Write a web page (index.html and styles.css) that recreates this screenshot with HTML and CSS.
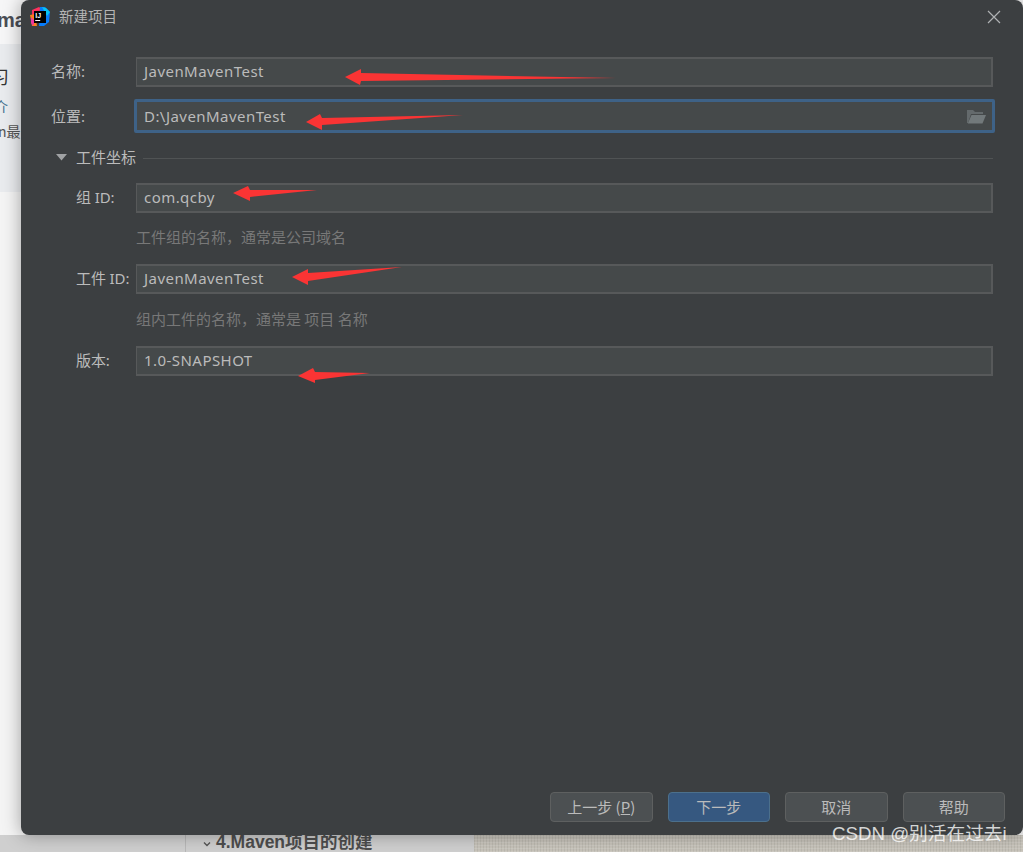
FILE: index.html
```html
<!DOCTYPE html>
<html lang="zh">
<head>
<meta charset="utf-8">
<title>新建项目</title>
<link rel="stylesheet" href="styles.css">
</head>
<body>
<div class="page">
  <div class="page-head">ma</div>
  <div class="page-panel">
    <div class="panel-icon">习</div>
    <div class="panel-line blue">介 </div>
    <div class="panel-line">n最</div>
  </div>
  <div class="page-rest"></div>
  <div class="page-foot">
    <div class="foot-side"></div>
    <div class="foot-toc">
      <svg class="toc-chevron" width="8" height="6" viewBox="0 0 8 6"><path d="M1 1.5 L4 4.5 L7 1.5" fill="none" stroke="#555" stroke-width="1.4"/></svg>
      <span>4.Maven项目的创建</span>
    </div>
    <div class="foot-texture"></div>
  </div>
</div>

<section class="dialog">
  <header class="titlebar">
    <svg class="app-icon" width="20" height="20" viewBox="0 0 20 20">
      <polygon points="2,3 9,0 13,3 10,10 2,12" fill="#fe315d"/>
      <polygon points="0,8 5,7 7,19 2,19" fill="#fc801d"/>
      <polygon points="10,0 15,0 20,5 19,15 14,19 9,19" fill="#087cfa"/>
      <polygon points="12,0 16,1 20,5 17,9" fill="#07c3f2"/>
      <polygon points="1,10 5,14 3,19 1,16" fill="#ee36a0"/>
      <rect x="4" y="4" width="12" height="12" fill="#000"/>
      <text x="5.2" y="10.6" class="app-icon-text">IJ</text>
      <rect x="5.2" y="13" width="5" height="1" fill="#fff"/>
    </svg>
    <span class="title">新建项目</span>
    <svg class="close" width="14" height="14" viewBox="0 0 14 14"><path d="M1 1 L13 13 M13 1 L1 13" stroke="#afb1b3" stroke-width="1.2" fill="none"/></svg>
  </header>

  <div class="form">
    <div class="row row-name">
      <label class="label">名称:</label>
      <div class="field">JavenMavenTest</div>
    </div>
    <div class="row row-location">
      <label class="label">位置:</label>
      <div class="field field-focus">
        <span>D:\JavenMavenTest</span>
        <svg class="folder" width="20" height="15" viewBox="0 0 20 15">
          <path d="M1 14 V1 H7 L9 3 H17 V5 H5 L2 14 Z" fill="#646a6c"/>
          <path d="M5.5 6 H20 L16.5 14.5 H1.8 Z" fill="#72797b"/>
        </svg>
      </div>
    </div>

    <div class="section">
      <svg class="caret" width="11" height="7" viewBox="0 0 11 7"><polygon points="0,0 11,0 5.5,6.5" fill="#a0a2a4"/></svg>
      <span class="section-title">工件坐标</span>
      <div class="section-rule"></div>
    </div>

    <div class="row nested row-group">
      <label class="label">组 ID:</label>
      <div class="field">com.qcby</div>
    </div>
    <p class="hint">工件组的名称，通常是公司域名</p>
    <div class="row nested row-hinted">
      <label class="label">工件 ID:</label>
      <div class="field">JavenMavenTest</div>
    </div>
    <p class="hint hint-second">组内工件的名称，通常是 项目 名称</p>
    <div class="row nested row-hinted">
      <label class="label">版本:</label>
      <div class="field">1.0-SNAPSHOT</div>
    </div>
  </div>

  <footer class="actions">
    <button class="btn">上一步 (<u>P</u>)</button>
    <button class="btn btn-primary">下一步</button>
    <button class="btn">取消</button>
    <button class="btn">帮助</button>
  </footer>
</section>

<svg class="arrows" width="1023" height="852" viewBox="0 0 1023 852">
  <polygon points="345,77 361,69 361,73 616,78 361,81 360,85" />
  <polygon points="306,122 320,114 322,118 463,115 322,125 322,130" />
  <polygon points="233,193 248,186 250,190 317,190 250,197 250,201" />
  <polygon points="292,277 308,269 308,273 402,267 308,281 308,285" />
  <polygon points="298,376 313,368 315,372 370,373 315,380 315,383" />
</svg>

<div class="watermark">CSDN @别活在过去i</div>
</body>
</html>
```

FILE: styles.css
```css
* { box-sizing: border-box; }

html, body {
  margin: 0;
  padding: 0;
  width: 1023px;
  height: 852px;
  overflow: hidden;
}

body {
  position: relative;
  font-family: "Noto Sans", "Noto Sans CJK SC", sans-serif;
  background: #f2f2f3;
}

.page {
  display: flex;
  flex-direction: column;
  height: 852px;
  overflow: hidden;
}

.page-head {
  height: 44px;
  background: #f6f6f7;
  color: #4a4d55;
  font: bold 20px/41px "Liberation Sans", sans-serif;
  margin-left: -3px;
}

.page-panel {
  height: 148px;
  background: #e9ebee;
  color: #555;
  font-size: 14px;
  padding-top: 20px;
}

.panel-icon {
  height: 22px;
  line-height: 24px;
  font-size: 18px;
  margin-left: -9px;
  color: #333;
  font-family: "Noto Sans CJK SC", sans-serif;
}

.panel-line {
  margin-top: 9px;
  height: 22px;
  line-height: 22px;
  font-family: "Noto Sans CJK SC", sans-serif;
  margin-left: -6px;
}

.panel-line + .panel-line { margin-left: -2px; margin-top: 3px; }

.blue { color: #44708f; }

.page-rest {
  flex: 1;
  background: #f4f4f4;
}

.page-foot {
  display: flex;
  height: 17px;
  background: #cfcfcf;
}

.foot-side {
  width: 186px;
  border-right: 1px solid #b8b8b8;
}

.foot-toc {
  width: 288px;
  display: flex;
  align-items: center;
  gap: 7px;
  padding-left: 17px;
  color: #4e4e4e;
  font: bold 17.5px/15px "Liberation Sans", "Noto Sans CJK SC", sans-serif;
  white-space: nowrap;
}

.foot-toc span { margin-left: -2px; margin-bottom: 2px; }

.foot-texture {
  flex: 1;
  background-color: #c7c3ba;
  background-image:
    repeating-linear-gradient(0deg, rgba(255,255,255,.12) 0 1px, transparent 1px 3px),
    repeating-linear-gradient(90deg, rgba(0,0,0,.06) 0 1px, transparent 1px 3px);
}

.dialog {
  position: absolute;
  left: 21px;
  top: 0;
  width: 1002px;
  height: 835px;
  display: flex;
  flex-direction: column;
  background: #3c3f41;
  border-radius: 8px;
  box-shadow: 0 0 18px rgba(0, 0, 0, .35);
  color: #bbbbbb;
  font-size: 15px;
}

.titlebar {
  display: flex;
  align-items: center;
  height: 36px;
  padding: 0 22px 2px 9px;
}

.app-icon { flex: none; }

.app-icon-text {
  font: bold 7px "Liberation Sans", sans-serif;
  fill: #fff;
}

.title {
  margin-left: 9px;
  margin-bottom: 3px;
  font-size: 14.5px;
  font-family: "Noto Sans CJK SC", sans-serif;
  color: #b4b4b4;
}

.close { margin-left: auto; }

.form {
  flex: 1;
  padding: 21px 30px 0;
}

.row {
  display: flex;
  align-items: center;
  height: 30px;
}

.label {
  width: 85px;
  flex: none;
  padding-bottom: 3px;
  font-family: "Noto Sans", "Noto Sans CJK SC", sans-serif;
  white-space: nowrap;
}

.nested .label {
  width: 60px;
  margin-left: 25px;
  letter-spacing: -0.1px;
}

.field {
  flex: 1;
  height: 100%;
  display: flex;
  align-items: center;
  justify-content: space-between;
  padding: 0 7px 2px;
  background: #45494a;
  border: 2px solid #57595a;
  border-left-width: 1px;
  letter-spacing: 0.45px;
  white-space: nowrap;
}

.row-location {
  margin-top: 12px;
  height: 34px;
}

.row-location .label { width: 83px; padding-bottom: 1px; }

.field-focus {
  margin-right: -2px;
  border: 3px solid #3e6287;
  border-radius: 2px;
  padding: 0 6px 1px 7px;
}

.folder { flex: none; margin-top: 2px; }

.section {
  display: flex;
  align-items: center;
  height: 20px;
  margin-top: 15px;
  padding-left: 5px;
}

.caret { flex: none; margin-bottom: 2px; }

.section-title {
  margin-left: 9px;
  margin-bottom: 3px;
  font-family: "Noto Sans CJK SC", sans-serif;
}

.section-rule {
  flex: 1;
  margin-left: 7px;
  height: 1px;
  background: #505354;
}

.row-group { margin-top: 15px; }

.hint {
  margin: 14px 0 0 85px;
  height: 20px;
  line-height: 20px;
  color: #787878;
  font-size: 15px;
  font-family: "Noto Sans CJK SC", sans-serif;
}

.hint-second { margin-top: 15px; }

.row-hinted { margin-top: 17px; }

.actions {
  display: flex;
  justify-content: flex-end;
  gap: 15px;
  padding: 0 18px 13px 0;
}

.btn {
  width: 102.5px;
  height: 30px;
  padding: 0 0 2px;
  background: #4c5052;
  border: 1px solid #5e6060;
  border-radius: 4px;
  color: #bbbbbb;
  font: 15px "Noto Sans CJK SC", sans-serif;
}

.btn-primary {
  background: #365880;
  border-color: #4c708c;
}

.arrows {
  position: absolute;
  left: 0;
  top: 0;
  pointer-events: none;
}

.arrows polygon { fill: #fa3434; }

.watermark {
  position: absolute;
  left: 832px;
  top: 821px;
  font: 18.7px/26px "Liberation Sans", "Noto Sans CJK SC", sans-serif;
  color: rgba(255, 255, 255, .78);
  white-space: nowrap;
}
```
